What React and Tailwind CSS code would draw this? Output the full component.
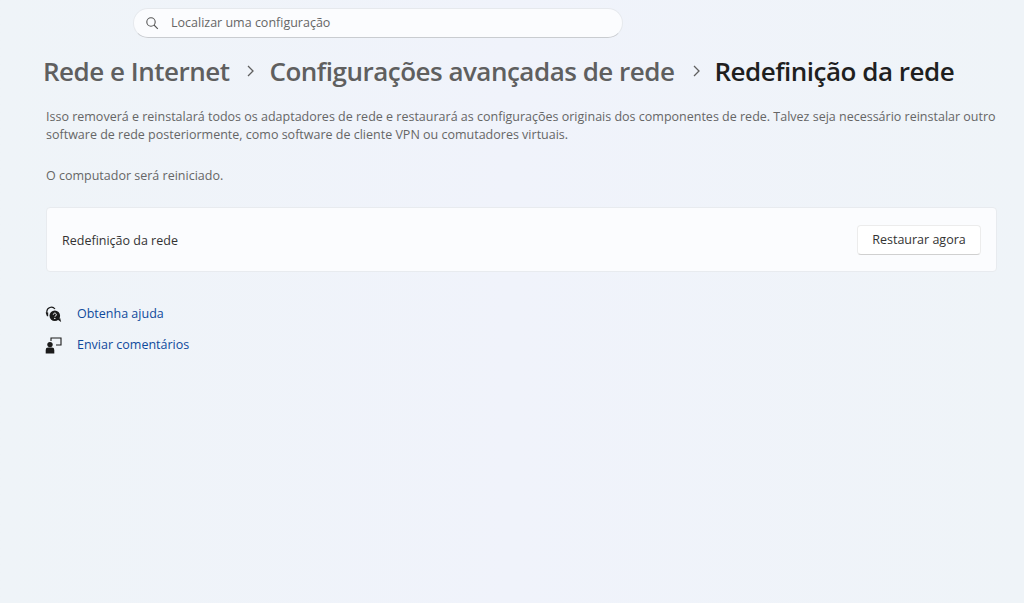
import React from 'react';

const font = "font-['Open_Sans','Noto_Sans',sans-serif]";

const Chevron = ({ className }) => (
  <svg className={className} width="10" height="12" viewBox="0 0 10 12" fill="none" stroke="currentColor" strokeWidth="1.3">
    <path d="M2 1l5 5-5 5" />
  </svg>
);

const HelpIcon = () => (
  <svg width="17" height="17" viewBox="0 0 17 17" fill="none">
    <path d="M1.8 7.5V6a4.6 4.6 0 0 1 8.2-3" stroke="#1b1b1b" strokeWidth="1.2" />
    <path d="M0.6 6.5h2.6v3.8H2z" fill="#1b1b1b" />
    <circle cx="9.8" cy="9.8" r="5.3" fill="#1b1b1b" />
    <path d="M12.5 13.5l3.6 2.4-1-3.8z" fill="#1b1b1b" />
    <path d="M8.3 8.6a1.5 1.5 0 1 1 2.3 1.3c-.5.3-.8.6-.8 1" stroke="#fff" strokeWidth="1" />
    <circle cx="9.8" cy="12.4" r=".7" fill="#fff" />
  </svg>
);

const FeedbackIcon = () => (
  <svg width="17" height="17" viewBox="0 0 17 17" fill="none">
    <circle cx="5" cy="7.6" r="2.7" fill="#1b1b1b" />
    <path d="M0.7 16.5v-3.5a2.4 2.4 0 0 1 2.4-2.4h3.8a2.4 2.4 0 0 1 2.4 2.4v3.5z" fill="#1b1b1b" />
    <path d="M6 4V1h10v7h-5" stroke="#1b1b1b" strokeWidth="1.1" />
  </svg>
);

export default function App() {
  return (
    <div className={`${font} w-[1024px] h-[603px] overflow-hidden bg-gradient-to-r from-[#eff4f8] via-[#f0f3fb] to-[#eff4f8] flex flex-col`}>
      <div className="pl-[133px] pt-[8px]">
        <div className="w-[490px] h-[30px] rounded-full bg-[#fbfcfe] border border-[#e6e9ed] border-b-[#c9ccd0] flex items-center pl-[11px]">
          <svg width="14" height="14" viewBox="0 0 14 14" fill="none" stroke="#555" strokeWidth="1.1">
            <circle cx="6" cy="6" r="4.2" />
            <path d="M9 9l3.8 3.8" />
          </svg>
          <span className="ml-[12px] pt-[1px] text-[12.5px] text-[#666]">Localizar uma configuração</span>
        </div>
      </div>

      <div className="flex items-center h-[40px] mt-[13px] pl-[43px] text-[26px] font-semibold tracking-[-0.5px] whitespace-nowrap">
        <span className="text-[#5f5f5f]">Rede e Internet</span>
        <Chevron className="ml-[17px] mr-[13px] text-[#5f5f5f]" />
        <span className="text-[#5f5f5f]">Configurações avançadas de rede</span>
        <Chevron className="ml-[18px] mr-[12px] text-[#5f5f5f]" />
        <span className="text-[#1f1f1f]">Redefinição da rede</span>
      </div>

      <div className="pl-[46px] pr-[24px] mt-[17px] text-[12.5px] leading-[18px] text-[#666]">
        <p className="whitespace-nowrap">Isso removerá e reinstalará todos os adaptadores de rede e restaurará as configurações originais dos componentes de rede. Talvez seja necessário reinstalar outro</p>
        <p className="whitespace-nowrap">software de rede posteriormente, como software de cliente VPN ou comutadores virtuais.</p>
        <p className="mt-[23px]">O computador será reiniciado.</p>
      </div>

      <div className="ml-[46px] mt-[22px] w-[951px] h-[65px] rounded-[4px] bg-[#fbfcfe] border border-[#e8ebef] flex items-center justify-between pl-[15px] pr-[15px]">
        <span className="pt-[3px] text-[12.5px] text-[#333]">Redefinição da rede</span>
        <button className="w-[124px] h-[30px] pt-[1px] rounded-[4px] bg-white border border-[#ececec] border-b-[#d0d0d0] text-[12.5px] text-[#333]">Restaurar agora</button>
      </div>

      <div className="mt-[34px] ml-[45px] flex flex-col gap-[14px]">
        <div className="flex items-center h-[17px]">
          <HelpIcon />
          <a className="ml-[15px] text-[12.5px] text-[#0f4a9c]">Obtenha ajuda</a>
        </div>
        <div className="flex items-center h-[17px]">
          <FeedbackIcon />
          <a className="ml-[15px] text-[12.5px] text-[#0f4a9c]">Enviar comentários</a>
        </div>
      </div>
    </div>
  );
}
